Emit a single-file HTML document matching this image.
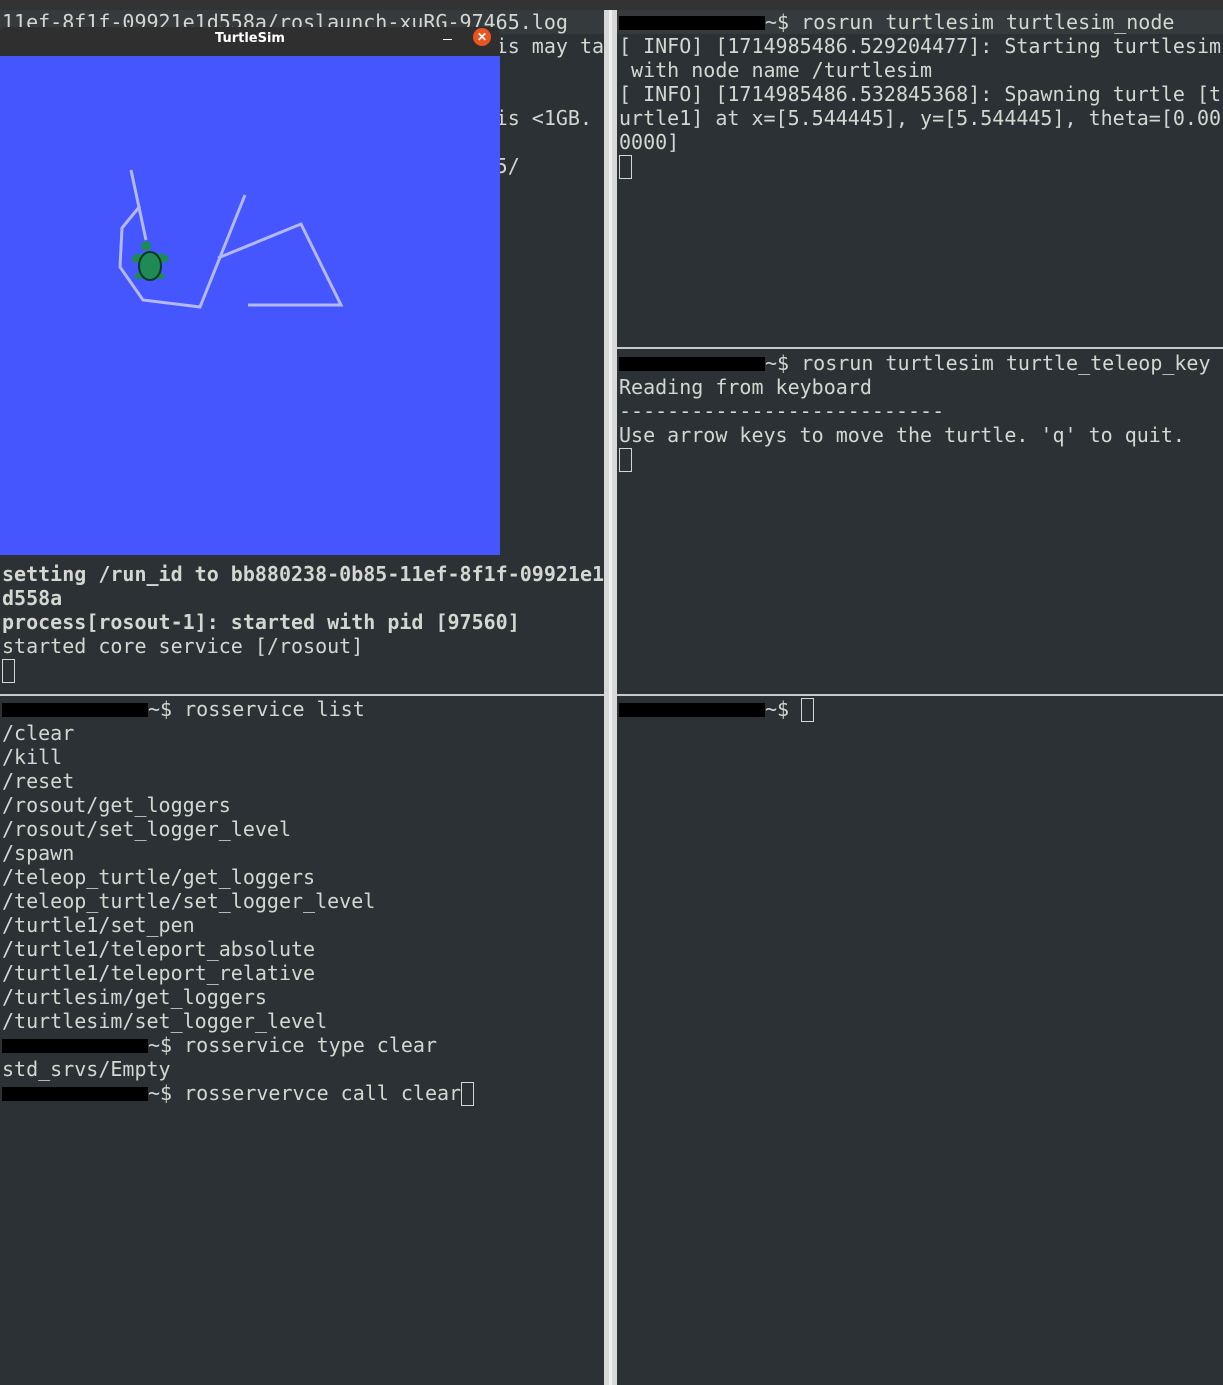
<!DOCTYPE html>
<html><head><meta charset="utf-8"><style>
body{margin:0;width:1223px;height:1385px;background:#2c3135;overflow:hidden;position:relative;font-family:"DejaVu Sans Mono","Liberation Mono",monospace;}
.p{position:absolute;font-size:20px;line-height:24px;color:#d3d7cf;white-space:pre;margin:0;}
.r{display:inline-block;width:146px;height:14px;background:#000;vertical-align:-1px;margin-right:0}
.c{display:inline-block;width:13px;height:24px;border:1px solid #d3d7cf;box-sizing:border-box;vertical-align:-6px}
b{font-weight:bold}
</style></head><body>
<div style="position:absolute;left:0;top:0;width:1223px;height:10px;background:#333"></div>
<div style="position:absolute;left:0;top:10px;width:604px;height:24px;background:#353a3d"></div>
<div style="position:absolute;left:617px;top:10px;width:606px;height:24px;background:#353a3d"></div>
<div class="p" style="left:2px;top:10px">11ef-8f1f-09921e1d558a/roslaunch-xuRG-97465.log
                                         is may ta


                                         is &lt;1GB.

                                         5/</div>
<div class="p" style="left:2px;top:562px"><b>setting /run_id to bb880238-0b85-11ef-8f1f-09921e1
d558a
process[rosout-1]: started with pid [97560]</b>
started core service [/rosout]
<span class="c"></span></div>
<div class="p" style="left:2px;top:697px"><span class="r"></span>~$ rosservice list
/clear
/kill
/reset
/rosout/get_loggers
/rosout/set_logger_level
/spawn
/teleop_turtle/get_loggers
/teleop_turtle/set_logger_level
/turtle1/set_pen
/turtle1/teleport_absolute
/turtle1/teleport_relative
/turtlesim/get_loggers
/turtlesim/set_logger_level
<span class="r"></span>~$ rosservice type clear
std_srvs/Empty
<span class="r"></span>~$ rosservervce call clear<span class="c"></span></div>
<div class="p" style="left:619px;top:10px"><span class="r"></span>~$ rosrun turtlesim turtlesim_node
[ INFO] [1714985486.529204477]: Starting turtlesim
 with node name /turtlesim
[ INFO] [1714985486.532845368]: Spawning turtle [t
urtle1] at x=[5.544445], y=[5.544445], theta=[0.00
0000]
<span class="c"></span></div>
<div class="p" style="left:619px;top:351px"><span class="r"></span>~$ rosrun turtlesim turtle_teleop_key
Reading from keyboard
---------------------------
Use arrow keys to move the turtle. 'q' to quit.
<span class="c"></span></div>
<div class="p" style="left:619px;top:697px"><span class="r"></span>~$ <span class="c"></span></div>
<div style="position:absolute;left:617px;top:347px;width:606px;height:2px;background:#c8c8c8"></div>
<div style="position:absolute;left:0;top:694px;width:1223px;height:2px;background:#c8c8c8"></div>
<div style="position:absolute;left:604px;top:10px;width:13px;height:1375px;background:#d8d8d8"></div>
<div style="position:absolute;left:609px;top:10px;width:3px;height:1375px;background:#f0f0f0"></div>
<div style="position:absolute;left:0;top:27px;width:500px;height:29px;background:#2f2f2f;border-radius:6px 6px 0 0"></div>
<div style="position:absolute;left:0;top:31px;width:500px;text-align:center;color:#fff;font:bold 13px 'DejaVu Sans',sans-serif">TurtleSim</div>
<div style="position:absolute;left:443px;top:39px;width:9px;height:1px;background:#fff"></div>
<div style="position:absolute;left:473px;top:28px;width:18px;height:18px;border-radius:50%;background:#e95420;color:#fff;font:bold 12px sans-serif;text-align:center;line-height:18px">✕</div>
<div style="position:absolute;left:0;top:56px;width:500px;height:499px;background:#4556ff"></div>
<svg style="position:absolute;left:0;top:0" width="500" height="555">
<polyline points="131,170 146,240" fill="none" stroke="#b3b8ff" stroke-width="3"/>
<polyline points="140,206 122,228 120,267 143,300 200,307 245,195" fill="none" stroke="#b3b8ff" stroke-width="3"/>
<polyline points="218,258 301,224 341,305 248,305" fill="none" stroke="#b3b8ff" stroke-width="3"/>
<ellipse cx="137" cy="258" rx="6" ry="4" fill="#1f8a55" transform="rotate(-30 137 258)"/>
<ellipse cx="163" cy="258" rx="6" ry="4" fill="#1f8a55" transform="rotate(30 163 258)"/>
<ellipse cx="139" cy="276" rx="5" ry="3" fill="#1f8a55"/>
<ellipse cx="160" cy="276" rx="5" ry="3" fill="#1f8a55"/>
<ellipse cx="150" cy="266" rx="11" ry="14" fill="#1f8a55" stroke="#0a3a20" stroke-width="2"/>
<circle cx="146" cy="246" r="5" fill="#1f8a55"/>
</svg>
</body></html>
